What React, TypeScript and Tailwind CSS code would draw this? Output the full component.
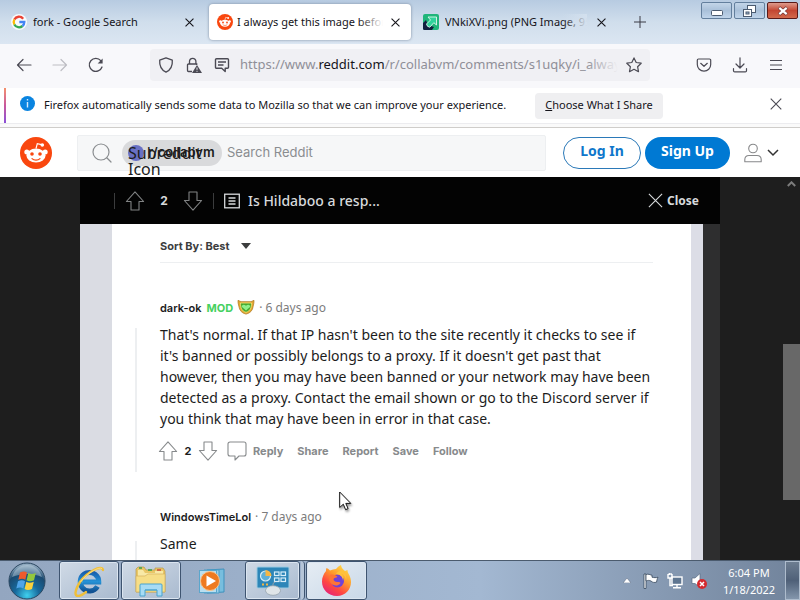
import { useState } from 'react'
import type { ReactNode } from 'react'

const UI = "font-['Noto_Sans','Open_Sans',sans-serif]"
const BOLD_UI = "font-['Inter','Noto_Sans',sans-serif]"

function CloseIcon({ className = 'size-[9px]' }: { className?: string }) {
  return (
    <svg viewBox="0 0 10 10" className={className} fill="none" stroke="currentColor" strokeWidth="1.1">
      <path d="M.6.6l8.8 8.8M9.4.6L.6 9.4" vectorEffect="non-scaling-stroke" />
    </svg>
  )
}

function RedditLogo({ className }: { className: string }) {
  return (
    <svg viewBox="0 0 32 32" className={className}>
      <circle cx="16" cy="16" r="16" fill="#f9470f" />
      <path d="M16 11.5l1.3-4.8 4.2 1" fill="none" stroke="#fff" strokeWidth="1.2" />
      <circle cx="22.3" cy="8" r="1.8" fill="#fff" />
      <circle cx="6.8" cy="15" r="2.5" fill="#fff" />
      <circle cx="25.2" cy="15" r="2.5" fill="#fff" />
      <ellipse cx="16" cy="18.6" rx="9.6" ry="7" fill="#fff" />
      <circle cx="12" cy="17" r="1.8" fill="#f9470f" />
      <circle cx="20" cy="17" r="1.8" fill="#f9470f" />
      <path d="M12 21.6c2 2 6 2 8 0" fill="none" stroke="#f9470f" strokeWidth="1.2" strokeLinecap="round" />
    </svg>
  )
}

function GoogleLogo() {
  return (
    <svg viewBox="0 0 48 48" className="size-4 shrink-0">
      <circle cx="24" cy="24" r="24" fill="#f8fafc" />
      <g fill="none" strokeWidth="7">
        <path d="M36.5 14A16 16 0 0 0 10 16.500" stroke="#ea4335" />
        <path d="M10 16.500a16 16 0 0 0 0 15" stroke="#fbbc05" />
        <path d="M10 31.500A16 16 0 0 0 34.500 36" stroke="#34a853" />
        <path d="M34.500 36A16 16 0 0 0 40 24H25" stroke="#4285f4" />
      </g>
    </svg>
  )
}

function ImgurArrow() {
  return (
    <svg viewBox="0 0 16 16" className="size-4 shrink-0">
      <rect width="16" height="16" rx="2" fill="#1fb57a" />
      <path d="M0 9l3-3 2 5 6 2-2 3H1.500Q0 16 0 14.500z" fill="#12203f" />
      <path d="M5 3h8.500v8l-2.700-2.300-4 4.500Q4 13 3.500 10l4-4z" fill="#2fd39b" stroke="#dff8ee" strokeWidth=".9" />
    </svg>
  )
}

function VoteArrow({ down = false }: { down?: boolean }) {
  return (
    <svg viewBox="0 0 20 20" className={down ? 'size-5 rotate-180' : 'size-5'} fill="none" stroke="currentColor" strokeWidth="1.1" strokeLinejoin="round">
      <path d="M10 .8L18.600 10.500H14V19H6v-8.500H1.400z" />
    </svg>
  )
}

type TabProps = { icon: ReactNode; title: string; active?: boolean; fade: string }

function Tab({ icon, title, active, fade }: TabProps) {
  return (
    <div
      className={
        'flex h-9 min-w-0 flex-[0_1_202px] items-center rounded px-2 ' +
        (active ? 'gap-1 bg-white shadow-[0_0_3px_#7b8ba0]' : 'gap-[6px]')
      }
    >
      {icon}
      <button type="button" className="relative min-w-0 flex-1 overflow-hidden whitespace-nowrap text-left">
        {title}
        <span className={'absolute inset-y-0 right-0 w-6 bg-linear-to-r from-transparent ' + fade} />
      </button>
      <button type="button" aria-label={'Close ' + title} className="flex size-4 shrink-0 items-center justify-center">
        <CloseIcon />
      </button>
    </div>
  )
}

function TitleBar() {
  return (
    <header className="flex h-11 shrink-0 items-center bg-linear-to-b from-[#b7cbe1] via-[#d0deec] to-[#dbe6f2] text-[11px] text-[#15141a]">
      <div className="flex min-w-0 flex-1 items-center gap-1 pl-[3px]">
        <Tab icon={<GoogleLogo />} title="fork - Google Search" fade="to-transparent" />
        <Tab icon={<RedditLogo className="size-4 shrink-0" />} title="I always get this image before" active fade="to-white" />
        <Tab icon={<ImgurArrow />} title="VNkiXVi.png (PNG Image, 950 × 540" fade="to-[#d3e0ee]" />
        <button type="button" aria-label="New tab" className="ml-[7px] flex size-6 shrink-0 items-center justify-center">
          <svg viewBox="0 0 12 12" className="size-3" stroke="#3b3a44" strokeWidth="1">
            <path d="M6 0v12M0 6h12" />
          </svg>
        </button>
      </div>
      <div className="ml-8 mr-[2px] flex gap-[2px] self-start pt-[2px]">
        <button type="button" aria-label="Minimize" className="flex h-[17px] w-[31px] items-center justify-center rounded-[2px] border border-[#637f9d] bg-linear-to-b from-[#c3d5e8] via-[#a9c0d9] to-[#bfd4ea]">
          <svg viewBox="0 0 12 6" className="mt-1 h-[6px] w-3"><rect x=".5" y=".5" width="11" height="5" rx="1" fill="#fff" stroke="#4b5b70" /></svg>
        </button>
        <button type="button" aria-label="Restore" className="flex h-[17px] w-[31px] items-center justify-center rounded-[2px] border border-[#637f9d] bg-linear-to-b from-[#c3d5e8] via-[#a9c0d9] to-[#bfd4ea]">
          <svg viewBox="0 0 13 12" className="h-3 w-[13px]" fill="#fff" stroke="#4b5b70">
            <rect x="4.500" y=".5" width="8" height="7" />
            <rect x=".5" y="4.500" width="8" height="7" />
            <rect x="3" y="7" width="3" height="2" fill="#9fb6cf" />
          </svg>
        </button>
        <button type="button" aria-label="Close window" className="flex h-[17px] w-[31px] items-center justify-center rounded-[2px] border border-[#5a1a18] bg-linear-to-b from-[#dd9a8c] via-[#c34632] to-[#d2694c]">
          <svg viewBox="0 0 12 10" className="h-[10px] w-3" fill="none">
            <path d="M2 1.500l8 7M10 1.500l-8 7" stroke="#6e3434" strokeWidth="3.600" />
            <path d="M2.300 1.800l7.400 6.400M9.700 1.800L2.300 8.200" stroke="#fff" strokeWidth="2.200" />
          </svg>
        </button>
      </div>
    </header>
  )
}

function ToolButton({ label, children }: { label: string; children: ReactNode }) {
  return (
    <button type="button" aria-label={label} className="flex size-4 shrink-0 items-center justify-center">
      {children}
    </button>
  )
}

function NavBar() {
  return (
    <nav className="flex h-11 shrink-0 items-center bg-[#f8f8fb] px-4 pb-[2px] text-[#4b4a54]">
      <div className="flex items-center gap-5">
        <ToolButton label="Back">
          <svg viewBox="0 0 16 16" className="size-4" fill="none" stroke="currentColor" strokeWidth="1.200" strokeLinecap="round" strokeLinejoin="round"><path d="M15 8H1.500M7 2.500L1.500 8 7 13.500" /></svg>
        </ToolButton>
        <ToolButton label="Forward">
          <svg viewBox="0 0 16 16" className="size-4 text-[#bdbdc3]" fill="none" stroke="currentColor" strokeWidth="1.200" strokeLinecap="round" strokeLinejoin="round"><path d="M1 8h13.500M9 2.500L14.500 8 9 13.500" /></svg>
        </ToolButton>
        <ToolButton label="Reload">
          <svg viewBox="0 0 16 16" className="size-4" fill="none" stroke="currentColor" strokeWidth="1.300" strokeLinecap="round"><path d="M14 10A6.500 6.500 0 1 1 12.800 3.700" /><path d="M14.600 1.500v5h-5z" fill="currentColor" stroke="none" /></svg>
        </ToolButton>
      </div>
      <div className="ml-[46px] flex h-8 min-w-0 flex-1 items-center rounded bg-[#f0f0f4] px-2">
        <div className="flex shrink-0 gap-3">
          <ToolButton label="Tracking protection">
            <svg viewBox="0 0 16 16" className="size-4" fill="none" stroke="currentColor" strokeWidth="1.300" strokeLinejoin="round"><path d="M8 .8l6.300 2.400c.4 5-1.400 9.500-6.300 12C3.100 12.700 1.300 8.200 1.700 3.200z" /></svg>
          </ToolButton>
          <ToolButton label="Connection not secure">
            <svg viewBox="0 0 16 16" className="size-4" fill="none" stroke="currentColor" strokeWidth="1.300"><path d="M3.500 7V4.500a3.200 3.200 0 0 1 6.400 0V7" /><path d="M6 14.500H2.500a1 1 0 0 1-1-1V8a1 1 0 0 1 1-1h8.200v1" /><path d="M11 8l5 8H6z" fill="currentColor" stroke="none" /><path d="M11 10.500v2.300M11 13.800v1" stroke="#f0f0f4" strokeWidth="1" /></svg>
          </ToolButton>
          <ToolButton label="Permissions">
            <svg viewBox="0 0 16 16" className="size-4" fill="none" stroke="currentColor" strokeWidth="1.400" strokeLinejoin="round"><path d="M2.500 1.700h11a1 1 0 0 1 1 1v7.500a1 1 0 0 1-1 1h-2.300v3.300l-3.500-3.300H2.500a1 1 0 0 1-1-1V2.700a1 1 0 0 1 1-1zM4 5h8M4 8h5.500" /></svg>
          </ToolButton>
        </div>
        <div className="relative ml-[10px] min-w-0 flex-1 overflow-hidden whitespace-nowrap text-[13px] text-[#8f8f98]">
          https://www.<span className="text-[#15141a]">reddit.com</span>/r/collabvm/comments/s1uqky/i_always_get
          <span className="absolute inset-y-0 right-0 w-8 bg-linear-to-r from-transparent to-[#f0f0f4]" />
        </div>
        <button type="button" aria-label="Bookmark this page" className="ml-2 shrink-0">
          <svg viewBox="0 0 16 16" className="size-4" fill="none" stroke="currentColor" strokeWidth="1.200" strokeLinejoin="round"><path d="M8 .9l2.200 4.600 5 .7-3.600 3.500.9 5L8 12.300l-4.500 2.400.9-5L.8 6.200l5-.7z" /></svg>
        </button>
      </div>
      <div className="ml-[46px] flex items-center gap-5">
        <ToolButton label="Pocket">
          <svg viewBox="0 0 16 16" className="size-4" fill="none" stroke="currentColor" strokeWidth="1.200" strokeLinejoin="round" strokeLinecap="round"><path d="M2.500 2h11a1.200 1.200 0 0 1 1.200 1.200V7.500a6.700 6.700 0 0 1-13.400 0V3.200A1.200 1.200 0 0 1 2.500 2zM4.700 6.300L8 9.300l3.300-3" /></svg>
        </ToolButton>
        <ToolButton label="Downloads">
          <svg viewBox="0 0 16 16" className="size-4" fill="none" stroke="currentColor" strokeWidth="1.200" strokeLinecap="round" strokeLinejoin="round"><path d="M8 .8v10M4 7l4 4 4-4M1.500 11.500v2.200a1.200 1.200 0 0 0 1.200 1.200h10.600a1.200 1.200 0 0 0 1.200-1.200v-2.200" /></svg>
        </ToolButton>
        <ToolButton label="Menu">
          <svg viewBox="0 0 16 16" className="size-4" stroke="currentColor" strokeWidth="1.200"><path d="M2 3.500h12M2 8h12M2 12.500h12" /></svg>
        </ToolButton>
      </div>
    </nav>
  )
}

function NoticeBar() {
  return (
    <div className="h-10 shrink-0 border-b border-[#cfcdca] bg-[#fafafa]">
      <div className="flex h-9 items-center border-b border-[#ececef] bg-white pr-[18px] text-[11px] text-[#15141a]">
        <span className="ml-1 h-full w-[2px] bg-linear-to-b from-[#f5906a] via-[#c8569c] to-[#8a4ed8]" />
        <svg viewBox="0 0 15 15" className="mb-1 ml-[14px] size-[15px] shrink-0">
          <circle cx="7.500" cy="7.500" r="7.500" fill="#0a84e0" />
          <path d="M7.500 3v1.600M7.500 6v5.500" stroke="#d4ebff" strokeWidth="1.400" />
        </svg>
        <span className="ml-[9px] whitespace-nowrap">
          Firefox automatically sends some data to Mozilla so that we can improve your experience.
        </span>
        <button type="button" className="ml-[29px] h-[26px] whitespace-nowrap rounded bg-[#efeff1] px-[10px]">
          <span className="underline">C</span>hoose What I Share
        </button>
        <button type="button" aria-label="Dismiss" className="mb-1 ml-auto text-[#4b4a54]">
          <CloseIcon className="size-3" />
        </button>
      </div>
    </div>
  )
}

function RedditHeader() {
  const [query, setQuery] = useState('')

  return (
    <div className="flex h-[49px] shrink-0 items-center bg-white pl-5 pr-[21px]">
      <a href="#home" aria-label="Reddit home">
        <RedditLogo className="size-8" />
      </a>
      <div className="ml-[25px] flex h-9 min-w-0 flex-1 items-center rounded-[2px] border border-[#edeff1] bg-[#f6f7f8] pl-[14px]">
        <svg viewBox="0 0 20 20" className="size-5 shrink-0" fill="none" stroke="#8a8d90" strokeWidth="1.200" strokeLinecap="round">
          <circle cx="9" cy="9" r="8" />
          <path d="M15 15l4 4" />
        </svg>
        <span className="relative ml-[10px] flex h-[26px] w-[100px] shrink-0 items-center rounded-full bg-[#d9dadc] pl-[6px] text-[#1c1c1c]">
          <span className="size-4 rounded-full bg-[#6870c4]" />
          <span className={BOLD_UI + ' ml-1 text-[13px] font-semibold'}>r/collabvm</span>
          <span className="absolute left-[6px] top-[5px] w-[76px] text-base/4 font-normal">Subreddit Icon</span>
        </span>
        <input
          type="search"
          aria-label="Search Reddit"
          placeholder="Search Reddit"
          value={query}
          onChange={e => setQuery(e.target.value)}
          className={BOLD_UI + ' ml-[5px] min-w-0 flex-1 bg-transparent text-[13px] outline-none placeholder:text-[#8a8d90]'}
        />
      </div>
      <button type="button" className="ml-[17px] h-8 w-[78px] shrink-0 rounded-full border border-[#2b79b8] pb-1 text-sm font-bold text-[#0f77cb]">Log In</button>
      <button type="button" className="ml-1 h-8 w-[85px] shrink-0 rounded-full bg-[#0079d3] pb-1 text-sm font-bold text-white">Sign Up</button>
      <button type="button" aria-label="User menu" className="ml-[14px] flex shrink-0 items-center gap-[5px]">
        <svg viewBox="0 0 18 20" className="h-5 w-[18px]" fill="none" stroke="#87888a" strokeWidth="1.100">
          <circle cx="9" cy="5.500" r="4.300" />
          <path d="M.8 18.800v-2c0-3 2.200-4.300 4.200-4.300h8c2 0 4.200 1.300 4.200 4.300v2z" strokeLinejoin="round" />
        </svg>
        <svg viewBox="0 0 12 8" className="h-2 w-3" fill="none" stroke="#333" strokeWidth="1.500"><path d="M1 1l5 5 5-5" /></svg>
      </button>
    </div>
  )
}

function PostBar() {
  return (
    <div className="flex h-[47px] items-center bg-[#030303] pl-[34px] pr-[21px] text-[#d7dadc]">
      <span className="h-4 w-px bg-[#3b3c3d]" />
      <button type="button" aria-label="Upvote" className="ml-[10px] text-[#818384]"><VoteArrow /></button>
      <span className={BOLD_UI + ' w-[38px] text-center text-xs font-bold'}>2</span>
      <button type="button" aria-label="Downvote" className="text-[#818384]"><VoteArrow down /></button>
      <span className="ml-[10px] h-4 w-px bg-[#3b3c3d]" />
      <svg viewBox="0 0 16 16" className="ml-[10px] size-4" fill="none" stroke="currentColor" strokeWidth="1.300">
        <rect x=".7" y="1.200" width="14.600" height="13.600" />
        <path d="M4.500 5h7M4.500 8h7M4.500 11h7" strokeWidth="1.500" />
      </svg>
      <h1 className="ml-2 text-sm font-medium">Is Hildaboo a resp...</h1>
      <button type="button" className="ml-auto flex items-center gap-1 text-xs font-bold">
        <CloseIcon className="size-[15px]" />
        Close
      </button>
    </div>
  )
}

function ModBadge() {
  return (
    <svg viewBox="0 0 18 18" className="mb-[2px] ml-1 h-4 w-[18px]" preserveAspectRatio="none">
      <path d="M1 1.500l3 1.500h10l3-1.500c.2 2-.3 4-.8 6.500-.5 5-3 8-7.200 9C4.800 16 2.500 13 1.800 8 1.300 5.500.8 3.500 1 1.500z" fill="#e5a92f" stroke="#b07a26" strokeWidth=".8" />
      <path d="M3.500 4.500h11c0 5-1 9-5.500 10.500C4.500 13.500 3.500 9.500 3.500 4.500z" fill="#46a82e" stroke="#f3e27a" strokeWidth=".9" />
      <path d="M9 13L5 9c-.9-2 1.800-4 4-1.500 2.200-2.500 4.900-.5 4 1.500z" fill="#8ff08c" />
    </svg>
  )
}

function CommentMeta({ author, age, mod }: { author: string; age: string; mod?: boolean }) {
  return (
    <div className="ml-[25px] flex h-6 items-center text-xs text-[#7c7c7c]">
      <a href={'#' + author} className={BOLD_UI + ' text-[11px] font-semibold text-[#1c1c1c]'}>{author}</a>
      {mod && <span className={BOLD_UI + ' ml-[5px] text-[11px] font-bold text-[#46d160]'}>MOD</span>}
      {mod && <ModBadge />}
      <span className="ml-1">· {age}</span>
    </div>
  )
}

const ACTIONS = ['Share', 'Report', 'Save', 'Follow']

function Comments() {
  return (
    <div className="bg-white pl-[23px] pr-[38px] pt-3">
      <div className="ml-[25px] border-b border-[#edeff1] pb-[6px]">
        <button type="button" className={BOLD_UI + ' flex h-5 items-center gap-3 text-[11px] font-bold text-[#3c3d3e]'}>
          Sort By: Best
          <svg viewBox="0 0 10 6" className="h-[6px] w-[10px]" fill="currentColor"><path d="M0 0h10L5 6z" /></svg>
        </button>
      </div>

      <article className="pt-[33px]">
        <CommentMeta author="dark-ok" age="6 days ago" mod />
        <div className="mt-1 flex">
          <span className="mt-1 w-[2px] shrink-0 bg-[#edeff1]" />
          <div className="min-w-0 flex-1 pb-[11px] pl-[21px]">
            <p className="pl-[2px] text-sm/[21px] text-[#1c1c1c]">
              That's normal. If that IP hasn't been to the site recently it checks to see if it's banned or possibly belongs to a proxy. If it doesn't get past that however, then you may have been banned or your network may have been detected as a proxy. Contact the email shown or go to the Discord server if you think that may have been in error in that case.
            </p>
            <div className={BOLD_UI + ' flex items-center pt-3 text-[11px] font-bold text-[#878a8c]'}>
              <button type="button" aria-label="Upvote"><VoteArrow /></button>
              <span className="w-5 text-center text-[#1c1c1c]">2</span>
              <button type="button" aria-label="Downvote"><VoteArrow down /></button>
              <button type="button" className="ml-[9px] flex items-center gap-[6px]">
                <svg viewBox="0 0 20 20" className="size-5" fill="none" stroke="currentColor" strokeWidth="1.100" strokeLinejoin="round">
                  <path d="M3 1h14a2 2 0 0 1 2 2v10a2 2 0 0 1-2 2h-5l-4 4v-4H3a2 2 0 0 1-2-2V3a2 2 0 0 1 2-2z" />
                </svg>
                Reply
              </button>
              {ACTIONS.map(a => (
                <button key={a} type="button" className="ml-[14px]">{a}</button>
              ))}
            </div>
          </div>
        </div>
      </article>

      <article className="pt-[33px]">
        <CommentMeta author="WindowsTimeLol" age="7 days ago" />
        <div className="mt-1 flex">
          <span className="mt-2 w-[2px] shrink-0 bg-[#edeff1]" />
          <p className="pb-10 pl-[23px] text-sm/[21px] text-[#1c1c1c]">Same</p>
        </div>
      </article>
    </div>
  )
}

function Page() {
  return (
    <main className="flex min-h-0 flex-1 overflow-hidden bg-[#1e1e1e]">
      <div className="ml-[80px] min-w-0 flex-1">
        <PostBar />
        <div className="flex bg-[#2e2e2f]">
          <div className="w-8 shrink-0 bg-[#dadce3]" />
          <div className="min-w-0 flex-1"><Comments /></div>
          <div className="mr-[17px] w-3 shrink-0 bg-[#dcdde6]" />
        </div>
      </div>
      <div className="ml-[63px] flex w-[17px] shrink-0 flex-col items-center">
        <svg viewBox="0 0 9 6" className="mt-1 h-[6px] w-[9px]" fill="none" stroke="#7c7c7c" strokeWidth="2"><path d="M.8 5l3.700-3.700L8.200 5" /></svg>
        <div className="mt-auto mb-[60px] h-[156px] w-full bg-[#686868]" />
      </div>
    </main>
  )
}

function StartOrb() {
  return (
    <svg viewBox="0 0 38 38" className="size-[38px]">
      <defs>
        <radialGradient id="orb" cx=".5" cy=".9" r=".85">
          <stop offset="0" stopColor="#3fd0ee" />
          <stop offset=".4" stopColor="#17699c" />
          <stop offset=".75" stopColor="#1b4a70" />
          <stop offset="1" stopColor="#8fa9bf" />
        </radialGradient>
      </defs>
      <circle cx="19" cy="19" r="18" fill="url(#orb)" stroke="#2b4761" />
      <path d="M4 15C7 6 13 3 19 3s12 3 15 12c-9-4-20-4-30 0z" fill="#d7e5ef" opacity=".4" />
      <path d="M12 10.500c3-1.500 5-1.300 7 0l-1.700 7.300c-2-1.300-4-1.500-7 0z" fill="#ee5a2c" />
      <path d="M20.300 11c2 1.300 4.500 1.300 7.500 0l-1.800 7.300c-3 1.300-5.400 1.200-7.400 0z" fill="#93c83d" />
      <path d="M10 19.200c3-1.500 5-1.300 7 0L15.300 26.500c-2-1.300-4-1.500-7 0z" fill="#4fa4e8" />
      <path d="M18.300 19.700c2 1.300 4.500 1.300 7.500 0L24 27c-3 1.300-5.400 1.200-7.400 0z" fill="#fbd13c" />
    </svg>
  )
}

function IeIcon() {
  return (
    <svg viewBox="0 0 32 32" className="size-8" fill="none">
      <defs>
        <linearGradient id="ie" x1="0" y1="0" x2="0" y2="1">
          <stop offset="0" stopColor="#1a5fae" />
          <stop offset=".5" stopColor="#2592d6" />
          <stop offset="1" stopColor="#125293" />
        </linearGradient>
      </defs>
      <path d="M24.500 21.500A9.300 9.300 0 1 1 25.800 17H10" stroke="url(#ie)" strokeWidth="5" />
      <path d="M30 5C29-1 14 7 7 17 2 25 1 31 5 31c2 0 5-1.500 8-4" stroke="#f0bf39" strokeWidth="2.400" strokeLinecap="round" />
      <path d="M29 3.500C26 1.500 14 8 7.500 17" stroke="#fbe598" strokeWidth=".8" />
    </svg>
  )
}

function ExplorerIcon() {
  return (
    <svg viewBox="0 0 34 32" className="h-8 w-[34px]">
      <path d="M2 27V4l2-2h6l2 3h9V3h8l2 3v21z" fill="#e9c766" stroke="#b8984a" strokeWidth=".7" />
      <path d="M4 5h5l2 3h10V6h8v21H4z" fill="#f8e9a6" />
      <path d="M2 27V11h9l3-2h17v18z" fill="#f6de87" stroke="#d5b35d" strokeWidth=".7" />
      <path d="M5 3h3M14 5h4" stroke="#35a050" strokeWidth="1.500" />
      <path d="M23 5h4" stroke="#c8483a" strokeWidth="1.500" />
      <path d="M6 31V20q0-1 1-1h20q1 0 1 1v11h-5v-6H11v6z" fill="#a7dbf4" stroke="#48a3cf" />
      <path d="M11 25h12" stroke="#48a3cf" />
    </svg>
  )
}

function PlayerIcon() {
  return (
    <svg viewBox="0 0 28 26" className="h-[26px] w-7">
      <path d="M8 2l17-1v23L8 25z" fill="#78bede" stroke="#3f91bd" />
      <path d="M5 2l15 0v23H5z" fill="#9cd1ea" stroke="#4a9cc7" />
      <rect x=".5" y="2.500" width="17" height="22" fill="#b9dff0" stroke="#5aa6cc" />
      <circle cx="11" cy="13" r="9.500" fill="#ee7a20" stroke="#f9c48d" />
      <path d="M7.500 7.500L17 13l-9.500 5.500z" fill="#fff" />
    </svg>
  )
}

function ControlPanelIcon() {
  return (
    <svg viewBox="0 0 34 30" className="h-[30px] w-[34px]">
      <rect x="1" y="1" width="32" height="21" rx="1" fill="#2d86b8" stroke="#9ccbe2" />
      <circle cx="9.500" cy="10" r="5" fill="#5eb0d8" stroke="#d8eef8" strokeWidth="1.200" />
      <path d="M9.500 10V4a6 6 0 0 1 6 6z" fill="#f4b643" />
      <g fill="#2d86b8" stroke="#d8eef8" strokeWidth="1.200">
        <rect x="18.500" y="6" width="4.500" height="3.500" />
        <rect x="25" y="6" width="4.500" height="3.500" />
        <rect x="18.500" y="12" width="4.500" height="3.500" />
        <rect x="25" y="12" width="4.500" height="3.500" />
      </g>
      <path d="M6 18.500h2M10 18.500h2" stroke="#f4b643" strokeWidth="2" />
      <ellipse cx="17" cy="24.500" rx="7.500" ry="4.800" fill="#dfe5e8" stroke="#94a2ac" strokeWidth=".8" />
      <path d="M17 20q-1-3 2-4" fill="none" stroke="#94a2ac" />
    </svg>
  )
}

function FirefoxIcon() {
  return (
    <svg viewBox="0 0 32 32" className="size-8">
      <defs>
        <linearGradient id="fox" x1=".85" y1="0" x2=".2" y2="1">
          <stop offset="0" stopColor="#ffe54a" />
          <stop offset=".4" stopColor="#ff9a2d" />
          <stop offset=".7" stopColor="#ff4742" />
          <stop offset="1" stopColor="#e2207e" />
        </linearGradient>
      </defs>
      <path d="M5 6c0-1 0-2 .5-3 1.500.5 2.500 1.500 3.500 2.500C11 4.500 13 4 15 4c1-1.500 3-3 5-4 .3 3 2 4.500 4 6l2.500-1c0 2 .8 3.500 2 5.500C33 20 27 31 16 31 7 31 1 24.500 1 16.500 1 12.500 2.500 9 5 6z" fill="url(#fox)" />
      <circle cx="16.500" cy="16" r="6.500" fill="#7042d8" />
      <path d="M9 10c3-1 5 0 7.500 1.800-1 1.200-3.500 1-4 2.200 0 2 2.500 3.500 4.500 3 2-.4 3 .8 2 1.800-2 2.500-7 2.500-9.500-1-1.500-2.500-1.800-5-.5-7.800z" fill="#ff7436" />
      <path d="M15 9c4 0 7 3 7 7 1-3 0-6-2-7.500 3 1 5 4 5 7.500 1.500-5-1-9-5-10.500-2 .5-4 1.500-5 3.500z" fill="#ffc23a" />
    </svg>
  )
}

const TASK_BUTTON =
  'flex h-[39px] shrink-0 items-center justify-center rounded-[3px] border border-[#3e5470] shadow-[inset_0_0_0_1px_#dbe5f0] '

function Taskbar() {
  return (
    <footer className="flex h-10 shrink-0 items-center border-t border-[#4b5b6e] bg-linear-to-r from-[#93a6c0] via-[#a3b8d2] via-60% to-[#71839b]">
      <button type="button" aria-label="Start" className="ml-2 shrink-0"><StartOrb /></button>
      <button type="button" aria-label="Internet Explorer" className={TASK_BUTTON + 'ml-[13px] w-[60px] bg-linear-to-br from-[#d0dae6] to-[#a9bacf]'}><IeIcon /></button>
      <button type="button" aria-label="Windows Explorer" className={TASK_BUTTON + 'ml-[2px] w-[60px] bg-linear-to-br from-[#d0dae6] to-[#a9bacf]'}><ExplorerIcon /></button>
      <button type="button" aria-label="Media Player" className="ml-[18px] shrink-0"><PlayerIcon /></button>
      <button type="button" aria-label="Control Panel" className={TASK_BUTTON + 'ml-[18px] w-[55px] bg-linear-to-br from-[#d0dae6] to-[#a9bacf]'}><ControlPanelIcon /></button>
      <span className="ml-px h-full w-1 shrink-0 rounded-r border-r border-[#3e5470] bg-[#b5c5d8]" />
      <button type="button" aria-label="Firefox" className={TASK_BUTTON + 'ml-px w-[61px] bg-linear-to-br from-[#e6edf4] to-[#c9d8e8]'}><FirefoxIcon /></button>

      <div className="ml-auto flex h-full items-center text-white">
        <button type="button" aria-label="Show hidden icons">
          <svg viewBox="0 0 8 5" className="h-[5px] w-2"><path d="M0 5l4-5 4 5z" fill="#fff" stroke="#51627a" strokeWidth=".5" /></svg>
        </button>
        <svg viewBox="0 0 16 16" className="ml-3 size-4" fill="#fff" stroke="#35465c" strokeWidth=".8">
          <path d="M1 1h2v14.500H1z" />
          <path d="M3 1.500c2.500-1 4 .5 6 .7v2c2 .6 4 .6 6 0-1 1.600-1 3-1.500 5-2 .5-4 .4-5.500-1.200-1.700-.8-3-.8-5 0z" />
        </svg>
        <svg viewBox="0 0 16 16" className="ml-2 size-4" fill="none" stroke="#fff" strokeWidth="1.400">
          <rect x="5" y="4" width="10" height="7.500" fill="#5f7691" />
          <path d="M10 11.500v3M6 14.800h8M1 1v4h4V1M3 5v7.500h3M2.300 0v2M4 0v2" />
        </svg>
        <svg viewBox="0 0 16 16" className="ml-2 size-4">
          <path d="M1 5h3l5-4.500v14L4 10.500H1z" fill="#fff" stroke="#596b83" strokeWidth=".7" />
          <circle cx="11" cy="11" r="5" fill="#d42a2e" />
          <path d="M9 9l4 4M13 9l-4 4" stroke="#fff" strokeWidth="1.500" />
        </svg>
        <div className="ml-3 w-[60px] text-center text-[11px]/[17px]">
          <div>6:04 PM</div>
          <div>1/18/2022</div>
        </div>
        <button type="button" aria-label="Show desktop" className="ml-[6px] h-full w-[15px] border border-[#aebccd] bg-linear-to-b from-[#6d7d91] via-[#4f6078] to-[#8496ac]" />
      </div>
    </footer>
  )
}

export default function App() {
  return (
    <div className={'relative flex h-screen flex-col overflow-hidden ' + UI}>
      <TitleBar />
      <NavBar />
      <NoticeBar />
      <RedditHeader />
      <Page />
      <Taskbar />
      <svg viewBox="0 0 13 20" className="pointer-events-none absolute left-[339px] top-[491px] h-5 w-[13px] drop-shadow-[1px_2px_1px_#0006]">
        <path d="M.7 1v15.500l3.600-3.300L6.600 18.700l2.500-1.100-2.300-5.200h5z" fill="#fff" stroke="#111" strokeWidth="1" />
      </svg>
    </div>
  )
}
